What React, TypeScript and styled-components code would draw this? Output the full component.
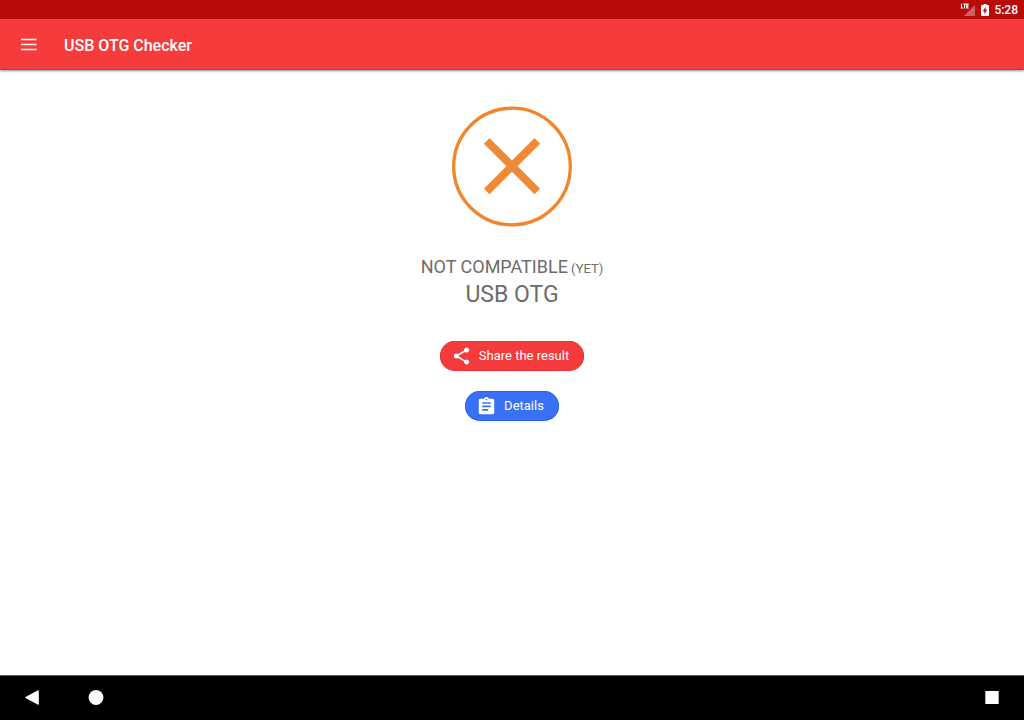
import React from 'react';
import styled, { createGlobalStyle } from 'styled-components';

const GlobalStyle = createGlobalStyle`
  * { box-sizing: border-box; }
  body {
    margin: 0;
    background: #fff;
    font-family: Roboto, "Liberation Sans", sans-serif;
  }
  button {
    font-family: inherit;
    border: 0;
    padding: 0;
    cursor: pointer;
  }
  svg { display: block; }
`;

const Screen = styled.div`
  min-height: 100vh;
  display: flex;
  flex-direction: column;
`;

const StatusBar = styled.div`
  height: 19px;
  padding: 1px 6px 0;
  display: flex;
  align-items: center;
  justify-content: flex-end;
  gap: 5px;
  background: #ba0b0b;
  color: #fff;
`;

const Clock = styled.time`
  font-size: 12px;
  line-height: 18px;
  font-weight: 500;
`;

const AppBar = styled.header`
  height: 51px;
  padding: 0 20px;
  display: flex;
  align-items: center;
  gap: 26px;
  background: #f53b3c;
  border-bottom: 1px solid #e93031;
  box-shadow: 0 1px 2px rgba(0, 0, 0, 0.45);
  color: #fff;
`;

const IconButton = styled.button`
  display: flex;
  background: transparent;
  color: #fff;
`;

const Title = styled.h1`
  margin: 0;
  padding-top: 4px;
  font-size: 16px;
  line-height: 20px;
  font-weight: 500;
`;

const Main = styled.main`
  flex: 1;
  padding: 36px 16px;
  display: flex;
  flex-direction: column;
  align-items: center;
`;

const Result = styled.div`
  margin: 27px 0 33px;
  text-align: center;
  color: #6c6c6c;
`;

const Verdict = styled.p`
  margin: 0;
  font-size: 18px;
  line-height: 26px;
`;

const Note = styled.small`
  font-size: 13px;
`;

const Feature = styled.p`
  margin: 0;
  font-size: 23px;
  line-height: 26px;
`;

const Actions = styled.div`
  display: flex;
  flex-direction: column;
  align-items: center;
  gap: 20px;
`;

const Pill = styled.button<{ $fill: string; $edge: string }>`
  height: 30px;
  padding: 0 15px 0 13px;
  display: flex;
  align-items: center;
  gap: 9px;
  border-radius: 15px;
  background: ${(p) => p.$fill};
  box-shadow: inset 0 0 0 1px ${(p) => p.$edge};
  color: #fff;
  font-size: 13px;
  line-height: 18px;
`;

const NavBar = styled.nav`
  height: 45px;
  padding: 0 24px;
  display: flex;
  align-items: center;
  gap: 48px;
  background: #000;
  border-top: 1px solid #5c615f;
`;

const RecentsButton = styled(IconButton)`
  margin-left: auto;
`;

export default function App() {
  return (
    <Screen>
      <GlobalStyle />
      <StatusBar>
        <svg width="17" height="14" viewBox="0 0 17 14" role="img" aria-label="LTE signal">
          <path d="M16 2v11H5z" fill="#fff" fillOpacity="0.35" />
          <path d="M2.500 .7v4.300h1.800M4.500 1.200h2.300M5.600 1.200v4.300M9.700 1.200H7.800v3.800h1.900M7.800 3.100h1.700" fill="none" stroke="#fff" strokeWidth="1.200" />
        </svg>
        <svg width="8" height="12" viewBox="0 0 8 12" role="img" aria-label="Battery charging">
          <path d="M2.500 0h3v1H7a1 1 0 0 1 1 1v9a1 1 0 0 1-1 1H1a1 1 0 0 1-1-1V2a1 1 0 0 1 1-1h1.500z" fill="#fff" />
          <path d="M4.600 2.700v3h1.600L3.400 10.300V7.200H1.800z" fill="#ba0b0b" />
        </svg>
        <Clock>5:28</Clock>
      </StatusBar>
      <AppBar>
        <IconButton aria-label="Open menu">
          <svg width="18" height="18" viewBox="0 0 18 18">
            <path d="M1 4.500h15.500M1 9.500h15.500M1 14.500h15.500" stroke="currentColor" strokeWidth="1.700" />
          </svg>
        </IconButton>
        <Title>USB OTG Checker</Title>
      </AppBar>
      <Main>
        <svg width="120" height="121" viewBox="0 0 120 121" role="img" aria-label="Not compatible">
          <circle cx="60" cy="60.500" r="58.300" fill="none" stroke="#f1852b" strokeWidth="3.300" />
          <path d="M34.700 34.900l50.600 50.600M85.300 34.900l-50.600 50.600" stroke="#f18a37" strokeWidth="8" />
        </svg>
        <Result>
          <Verdict>
            NOT COMPATIBLE<Note> (YET)</Note>
          </Verdict>
          <Feature>USB OTG</Feature>
        </Result>
        <Actions>
          <Pill $fill="#f53b3c" $edge="#f23032">
            <svg width="17" height="18" viewBox="2.500 1.500 19 21" fill="currentColor">
              <path d="M18 16.080c-.76 0-1.440.3-1.960.77L8.910 12.700c.05-.23.09-.46.09-.7s-.04-.47-.09-.7l7.050-4.110c.54.5 1.250.81 2.040.81 1.660 0 3-1.340 3-3s-1.340-3-3-3-3 1.340-3 3c0 .24.04.47.09.7L8.040 9.810C7.500 9.310 6.790 9 6 9c-1.660 0-3 1.340-3 3s1.340 3 3 3c.79 0 1.500-.31 2.040-.81l7.120 4.160c-.05.21-.08.43-.08.65 0 1.610 1.310 2.920 2.920 2.920s2.920-1.310 2.920-2.920-1.310-2.920-2.920-2.920z" />
            </svg>
            Share the result
          </Pill>
          <Pill $fill="#3a70f3" $edge="#2866f2">
            <svg width="17" height="18" viewBox="2.500 1 19 21" fill="currentColor">
              <path d="M19 3h-4.180C14.400 1.840 13.300 1 12 1s-2.400.84-2.820 2H5c-1.100 0-2 .9-2 2v14c0 1.100.9 2 2 2h14c1.100 0 2-.9 2-2V5c0-1.100-.9-2-2-2zm-7 0c.55 0 1 .45 1 1s-.45 1-1 1-1-.45-1-1 .45-1 1-1zm2 14H7v-2h7v2zm3-4H7v-2h10v2zm0-4H7V7h10v2z" />
            </svg>
            Details
          </Pill>
        </Actions>
      </Main>
      <NavBar aria-label="System navigation">
        <IconButton aria-label="Back">
          <svg width="16" height="16" viewBox="0 0 16 16" fill="currentColor">
            <path d="M14 .3q.8-.3.800.700v13q0 1-.8.700L1.500 8.100q-.9-.6 0-1.200z" />
          </svg>
        </IconButton>
        <IconButton aria-label="Home">
          <svg width="16" height="16" viewBox="0 0 16 16" fill="currentColor">
            <circle cx="8" cy="7.500" r="7.400" />
          </svg>
        </IconButton>
        <RecentsButton aria-label="Recent apps">
          <svg width="16" height="16" viewBox="0 0 16 16" fill="currentColor">
            <rect x="1.300" y="1" width="13.400" height="13" rx="0.600" />
          </svg>
        </RecentsButton>
      </NavBar>
    </Screen>
  );
}
